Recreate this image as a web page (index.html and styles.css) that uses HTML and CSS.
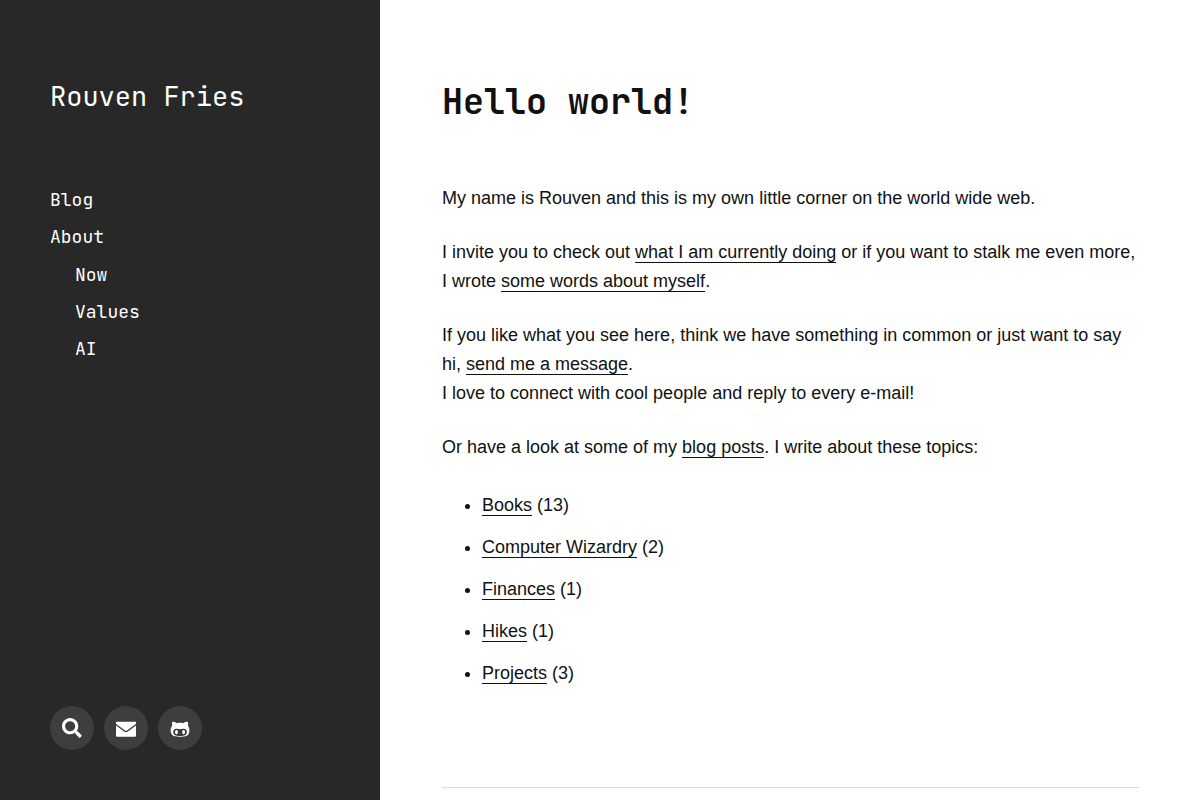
FILE: index.html
```html
<!DOCTYPE html>
<html lang="en">
<head>
<meta charset="UTF-8" />
<meta name="viewport" content="width=device-width, initial-scale=1" />
<title>Rouven Fries</title>
<link rel="stylesheet" href="styles.css">
</head>
<body>

<header class="sidebar">
  <a class="site-title" href="/">Rouven Fries</a>

  <nav class="menu" aria-label="Main">
    <ul>
      <li><a href="/blog">Blog</a></li>
      <li>
        <a href="/about">About</a>
        <ul class="submenu">
          <li><a href="/now">Now</a></li>
          <li><a href="/values">Values</a></li>
          <li><a href="/ai">AI</a></li>
        </ul>
      </li>
    </ul>
  </nav>

  <div class="social">
    <a href="/search" aria-label="Search">
      <svg width="20" height="20" viewBox="0 0 512 512"><path d="M497 434.700L405.300 343c-4.500-4.500-10.600-7-17-7H372c27.600-35.300 44-79.700 44-128C416 93.100 322.900 0 208 0S0 93.100 0 208s93.100 208 208 208c48.300 0 92.700-16.400 128-44v16.300c0 6.400 2.500 12.500 7 17l91.700 91.700c9.400 9.400 24.600 9.400 33.900 0l28.300-28.300c9.400-9.400 9.400-24.600.1-34zM208 336c-70.700 0-128-57.200-128-128 0-70.700 57.200-128 128-128 70.700 0 128 57.200 128 128 0 70.700-57.200 128-128 128z"/></svg>
    </a>
    <a href="mailto:hello@example.com" aria-label="E-mail">
      <svg width="20" height="20" viewBox="0 -32 512 512"><path d="M18 64H494Q512 64 512 82V108Q512 120 500 130L280 290Q256 306 232 290L12 130Q0 120 0 108V82Q0 64 18 64ZM0 160L216 318Q256 342 296 318L512 160V420Q512 448 484 448H28Q0 448 0 420Z"/></svg>
    </a>
    <a href="https://github.com" aria-label="GitHub">
      <svg width="20" height="20" viewBox="-16 -32 512 512"><path d="M186.100 328.700c0 20.900-10.900 55.100-36.700 55.100s-36.700-34.200-36.700-55.100 10.900-55.100 36.700-55.100 36.700 34.200 36.700 55.100zM480 278.200c0 31.900-3.200 65.700-17.500 95-37.900 76.600-142.100 74.800-216.700 74.800-75.800 0-186.200 2.700-225.600-74.800-14.600-29-20.200-63.100-20.200-95 0-41.900 13.900-81.500 41.500-113.600-5.200-15.800-7.700-32.400-7.700-48.800 0-21.500 4.900-32.300 14.600-51.800 45.300 0 74.300 9 108.800 36 29-6.900 58.800-10 88.700-10 27 0 54.200 2.900 80.400 9.200 34-26.700 63-35.200 107.800-35.200 9.800 19.500 14.600 30.300 14.600 51.800 0 16.400-2.600 32.700-7.700 48.200 27.500 32.400 39 72.300 39 114.200zm-64.300 50.500c0-43.900-26.700-82.600-73.500-82.600-18.900 0-37 3.400-56 6-14.900 2.300-29.800 3.200-45.100 3.200-15.200 0-30.100-.9-45.100-3.200-18.700-2.600-37-6-56-6-46.800 0-73.500 38.700-73.500 82.600 0 87.800 80.400 101.300 150.400 101.300h48.200c70.300 0 150.600-13.400 150.600-101.300zm-82.600-55.100c-25.800 0-36.700 34.200-36.700 55.100s10.900 55.100 36.700 55.100 36.700-34.200 36.700-55.100-10.900-55.100-36.700-55.100z"/></svg>
    </a>
  </div>
</header>

<main class="content">
  <h1>Hello world!</h1>
  <p>My name is Rouven and this is my own little corner on the world wide web.</p>
  <p>I invite you to check out <a href="/now">what I am currently doing</a> or if you want to stalk me even more, I wrote <a href="/about">some words about myself</a>.</p>
  <p>If you like what you see here, think we have something in common or just want to say hi, <a href="mailto:hello@example.com">send me a message</a>.<br>I love to connect with cool people and reply to every e-mail!</p>
  <p>Or have a look at some of my <a href="/blog">blog posts</a>. I write about these topics:</p>
  <ul class="topics">
    <li><a href="/tags/books">Books</a> (13)</li>
    <li><a href="/tags/computer-wizardry">Computer Wizardry</a> (2)</li>
    <li><a href="/tags/finances">Finances</a> (1)</li>
    <li><a href="/tags/hikes">Hikes</a> (1)</li>
    <li><a href="/tags/projects">Projects</a> (3)</li>
  </ul>
  <hr>
</main>

</body>
</html>
```
FILE: styles.css
```css
* {
  box-sizing: border-box;
}
body {
  display: flex;
  margin: 0;
  color: #111;
  background: #fff;
  font: 18px/29px "Liberation Sans", Arial, sans-serif;
}
a {
  color: inherit;
  text-decoration: none;
}
.sidebar {
  position: sticky;
  top: 0;
  display: flex;
  flex: 0 0 380px;
  flex-direction: column;
  height: 100vh;
  padding: 76px 50px 50px;
  color: #fff;
  background: #282828;
  font-family: "JetBrains Mono", "DejaVu Sans Mono", monospace;
}
.site-title {
  font-size: 27px;
  line-height: 40px;
}
.menu {
  margin-top: 65px;
  line-height: 37px;
}
.menu ul {
  margin: 0;
  padding: 0;
  list-style: none;
}
.menu .submenu {
  padding: 1px 0 0 25px;
}
.social {
  display: flex;
  gap: 10px;
  margin-top: auto;
}
.social a {
  display: flex;
  align-items: center;
  justify-content: center;
  width: 44px;
  height: 44px;
  border-radius: 50%;
  background: #3e3e3e;
}
.social svg {
  fill: #fff;
}
.content {
  flex: 1;
  min-width: 0;
  padding: 77px 61px 40px 62px;
}
h1 {
  margin: 0 0 57px;
  font: bold 35px/50px "JetBrains Mono", "DejaVu Sans Mono", monospace;
}
p {
  margin: 0 0 25px;
}
.content p a, .topics a {
  border-bottom: 1px solid #111;
}
.topics {
  margin: 29px 0 99px;
  padding-left: 40px;
}
.topics li {
  margin-bottom: 13px;
}
hr {
  margin: 0;
  border: 0;
  border-top: 1px solid #ddd;
}
```
